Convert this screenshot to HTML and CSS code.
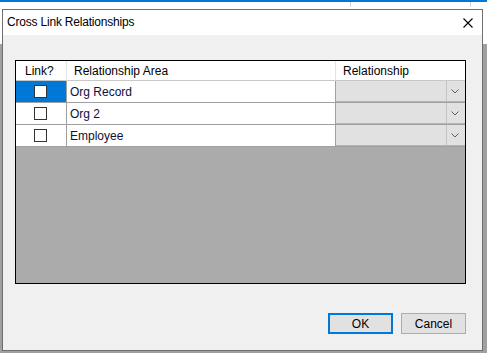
FILE: index.html
```html
<!DOCTYPE html>
<html>
    <head>
        <title>Cross Link Relationships</title>
        <link rel="stylesheet" href="styles.css">
    </head>
    <body>
        <div class="dialog">
            <div class="titleBar">
                <span class="titleText">Cross Link Relationships</span>
                <svg class="closeIcon" width="10" height="10" viewBox="0 0 10 10">
                    <path d="M0.5 0.5 L9.5 9.5 M9.5 0.5 L0.5 9.5" stroke="#000" stroke-width="1.1" fill="none"/>
                </svg>
            </div>
            <div class="content">
                <div class="grid">
                    <div class="row headRow">
                        <div class="cell head linkHead">Link?</div>
                        <div class="cell head">Relationship Area</div>
                        <div class="cell head">Relationship</div>
                    </div>
                    <div class="row">
                        <div class="cell checkCell selected"><span class="checkBox"></span></div>
                        <div class="cell textCell">Org Record</div>
                        <div class="cell comboCell"><div class="comboBox"><span class="comboValue"></span><span class="comboButton"><svg width="8" height="5" viewBox="0 0 8 5"><path d="M0.5 0.5 L4 4 L7.5 0.5" stroke="#5f5f5f" fill="none"/></svg></span></div></div>
                    </div>
                    <div class="row">
                        <div class="cell checkCell"><span class="checkBox"></span></div>
                        <div class="cell textCell">Org 2</div>
                        <div class="cell comboCell"><div class="comboBox"><span class="comboValue"></span><span class="comboButton"><svg width="8" height="5" viewBox="0 0 8 5"><path d="M0.5 0.5 L4 4 L7.5 0.5" stroke="#5f5f5f" fill="none"/></svg></span></div></div>
                    </div>
                    <div class="row">
                        <div class="cell checkCell"><span class="checkBox"></span></div>
                        <div class="cell textCell">Employee</div>
                        <div class="cell comboCell"><div class="comboBox"><span class="comboValue"></span><span class="comboButton"><svg width="8" height="5" viewBox="0 0 8 5"><path d="M0.5 0.5 L4 4 L7.5 0.5" stroke="#5f5f5f" fill="none"/></svg></span></div></div>
                    </div>
                </div>
                <div class="buttonRow">
                    <button class="dlgButton defaultButton">OK</button>
                    <button class="dlgButton">Cancel</button>
                </div>
            </div>
        </div>
    </body>
</html>
```

FILE: styles.css
```css
body {
    margin: 0;
    height: 351px;
    overflow: hidden;
    font-family: "Liberation Sans", Arial, sans-serif;
    font-size: 12px;
    border-top: 2px solid #0078d7;
    /* window behind the dialog: white strip, two grid lines, gray client area */
    background:
        linear-gradient(#d4d4d4, #d4d4d4) 350px 0 / 1px 7px no-repeat,
        linear-gradient(#d4d4d4, #d4d4d4) 470px 0 / 1px 7px no-repeat,
        linear-gradient(#ffffff 0 44px, #a0a0a0 44px);
}

/* Dialog window */
.dialog {
    box-sizing: border-box;
    width: 481px;
    height: 342px;
    margin: 7px 0 0 2px;
    border: 1px solid #6e6e6e;
    background-color: #f0f0f0;
    display: flex;
    flex-direction: column;
}

.titleBar {
    height: 24px;
    background-color: #ffffff;
    display: flex;
    align-items: center;
    justify-content: space-between;
    padding: 0 9px 1px 4px;
}

.titleText {
    color: #000;
    letter-spacing: -0.2px;
}

.closeIcon {
    display: block;
    margin-top: 2px;
}

.content {
    flex: 1;
    display: flex;
    flex-direction: column;
    padding: 25px 16px 16px 12px;
}

/* Data grid */
.grid {
    box-sizing: border-box;
    width: 451px;
    height: 224px;
    border: 1px solid #000;
    background-color: #ababab;
}

.row {
    display: grid;
    grid-template-columns: 51px 269px 129px;
    height: 22px;
}

.headRow {
    height: 20px;
}

.cell {
    box-sizing: border-box;
    border-right: 1px solid #a0a0a0;
    border-bottom: 1px solid #a0a0a0;
    background-color: #fff;
    display: flex;
    align-items: center;
}

.cell:last-child {
    border-right: none;
}

.head {
    padding-left: 7px;
    border-right-color: #e3e3e3;
    border-bottom-color: #c8c8c8;
    padding-top: 1px;
}

.linkHead {
    padding-left: 9px;
}

.textCell {
    padding-left: 3px;
    color: #0f0f3a;
}

.checkCell {
    justify-content: center;
    padding-right: 1px;
}

.selected {
    background-color: #0078d7;
}

.checkBox {
    box-sizing: border-box;
    width: 13px;
    height: 13px;
    border: 1px solid #333;
    background-color: #fff;
}

.comboCell {
    align-items: stretch;
    background-color: #e1e1e1;
}

.comboBox {
    flex: 1;
    display: flex;
    border-bottom: 1px solid #b4b4b4;
}

.comboValue {
    flex: 1;
}

.comboButton {
    width: 16px;
    border-left: 1px solid #c4c4c4;
    display: flex;
    align-items: center;
    justify-content: center;
    padding-right: 2px;
}

.comboButton svg {
    display: block;
}

/* Buttons */
.buttonRow {
    margin-top: auto;
    display: flex;
    justify-content: flex-end;
    gap: 8px;
}

.dlgButton {
    box-sizing: border-box;
    width: 65px;
    height: 21px;
    padding: 0;
    font-family: "Liberation Sans", Arial, sans-serif;
    font-size: 12px;
    color: #000;
    background-color: #e1e1e1;
    border: 1px solid #adadad;
}

.defaultButton {
    border: 2px solid #0078d7;
}
```
